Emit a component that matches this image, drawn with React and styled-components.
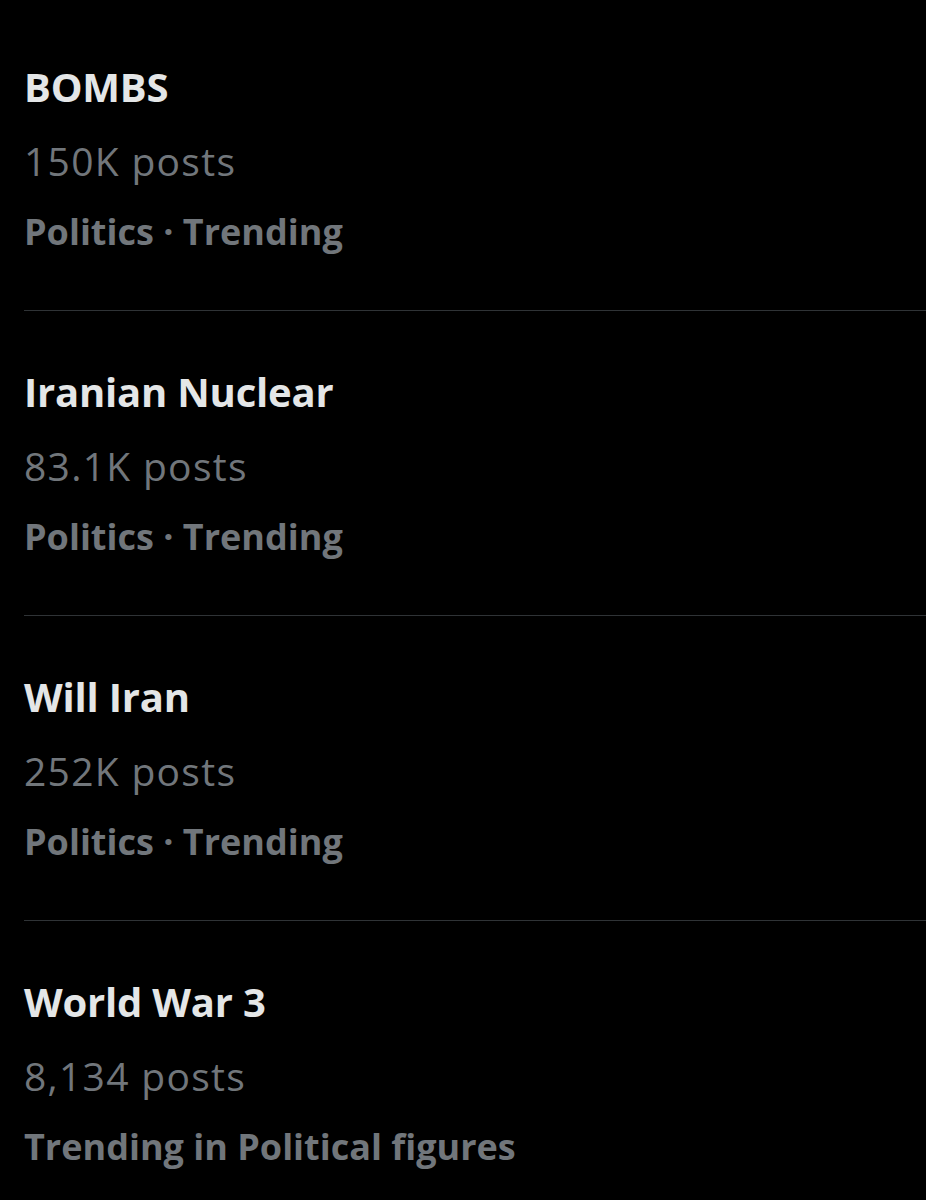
import React from "react";
import styled, { createGlobalStyle } from "styled-components";

const GlobalStyle = createGlobalStyle`
  html, body {
    margin: 0;
    padding: 0;
    background: #000000;
  }
  body {
    font-family: "Open Sans", "Noto Sans", sans-serif;
    font-variant-ligatures: none;
    -webkit-font-smoothing: antialiased;
  }
`;

const Page = styled.div`
  background: #000000;
  min-height: 1200px;
  padding-top: 6px;
  overflow: hidden;
`;

const TrendRow = styled.div`
  display: flex;
  flex-direction: column;
  gap: 27px;
  margin-left: 24px;
  padding: 56px 0 57px 0;
  border-bottom: 1px solid ${(p) => (p.last ? "transparent" : "#2f3336")};
`;

const Title = styled.div`
  color: #e4e6e7;
  font-size: 40px;
  line-height: 49px;
  font-weight: 700;
  letter-spacing: -0.2px;
`;

const Posts = styled.div`
  color: #71767b;
  font-size: 39px;
  line-height: 46px;
  font-weight: 400;
  letter-spacing: 1.3px;
`;

const Category = styled.div`
  color: #71767b;
  font-size: 36px;
  line-height: 42px;
  font-weight: 700;
`;

const trends = [
  { title: "BOMBS", posts: "150K posts", category: "Politics · Trending" },
  { title: "Iranian Nuclear", posts: "83.1K posts", category: "Politics · Trending" },
  { title: "Will Iran", posts: "252K posts", category: "Politics · Trending" },
  { title: "World War 3", posts: "8,134 posts", category: "Trending in Political figures" },
];

export default function App() {
  return (
    <>
      <GlobalStyle />
      <Page>
        {trends.map((t, i) => (
          <TrendRow key={t.title} last={i === trends.length - 1}>
            <Title>{t.title}</Title>
            <Posts>{t.posts}</Posts>
            <Category>{t.category}</Category>
          </TrendRow>
        ))}
      </Page>
    </>
  );
}
